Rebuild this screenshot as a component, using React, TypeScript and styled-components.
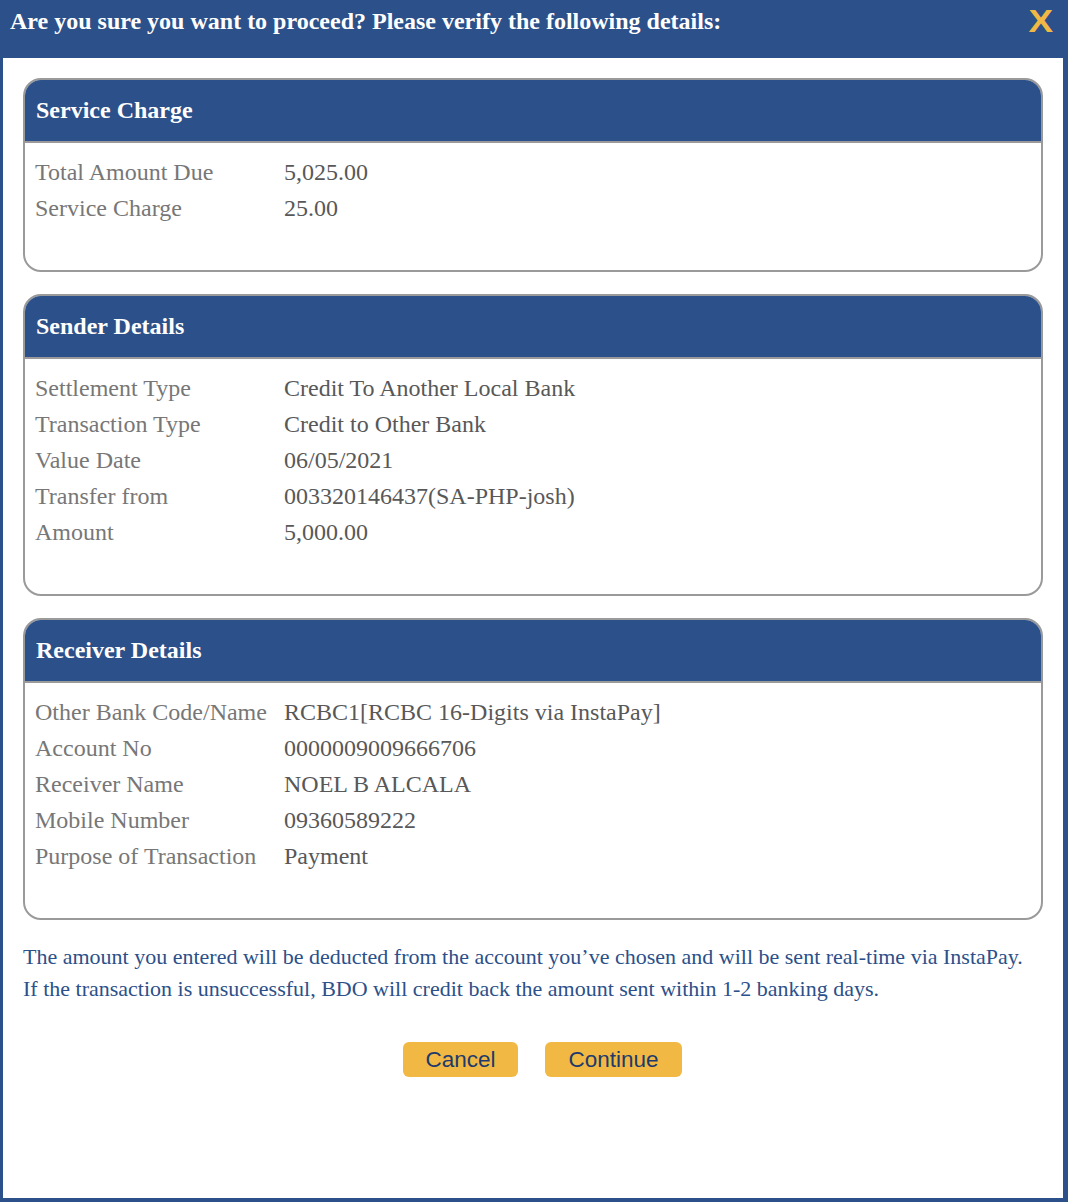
import React from "react";
import styled, { createGlobalStyle } from "styled-components";

const colors = {
    navy: "#2c5089",
    border: "#9a9a9a",
    label: "#777777",
    value: "#585858",
    gold: "#f1b943",
    goldText: "#1e3a6c",
};

const GlobalStyle = createGlobalStyle`
    html, body {
        margin: 0;
        padding: 0;
        background: ${colors.navy};
    }
    body {
        font-family: "Liberation Serif", "Times New Roman", serif;
    }
`;

const Dialog = styled.div`
    width: 1068px;
    height: 1202px;
    background: ${colors.navy};
    display: flex;
    flex-direction: column;
    box-sizing: border-box;
    padding: 0 5px 4px 3px;
`;

const TitleBar = styled.div`
    height: 58px;
    display: flex;
    align-items: center;
    justify-content: space-between;
    padding: 0 12px 16px 7px;
    box-sizing: border-box;

    h2 {
        margin: 0;
        color: #ffffff;
        font-size: 24px;
        font-weight: bold;
        font-family: "Liberation Serif", "Times New Roman", serif;
    }
`;

const CloseBtn = styled.span`
    color: ${colors.gold};
    font-family: "Liberation Sans", Arial, sans-serif;
    font-weight: bold;
    font-size: 32px;
    line-height: 1;
    transform: scaleX(1.15);
    cursor: pointer;
`;

const Content = styled.div`
    flex: 1;
    background: #ffffff;
    padding: 20px 20px 0 20px;
    display: flex;
    flex-direction: column;
    gap: 22px;
`;

const Card = styled.section`
    border: 2px solid ${colors.border};
    border-radius: 18px;
    overflow: hidden;
`;

const CardHeader = styled.div`
    background: ${colors.navy};
    height: 61px;
    border-bottom: 2px solid ${colors.border};
    display: flex;
    align-items: center;
    padding-left: 11px;

    h3 {
        margin: 0;
        color: #ffffff;
        font-size: 24px;
        font-weight: bold;
        font-family: "Liberation Serif", "Times New Roman", serif;
    }
`;

const CardBody = styled.div`
    padding: 11px 10px 44px 10px;
`;

const Row = styled.div`
    display: grid;
    grid-template-columns: 249px 1fr;
    height: 36px;
    align-items: center;
    font-size: 24px;
`;

const Label = styled.span`
    color: ${colors.label};
`;

const Value = styled.span`
    color: ${colors.value};
`;

const Notice = styled.p`
    margin: -1px 0 0 0;
    color: ${colors.navy};
    font-size: 22px;
    line-height: 32px;
`;

const Buttons = styled.div`
    display: flex;
    justify-content: center;
    gap: 27px;
    padding-left: 19px;
    margin-top: 37px;
`;

const Button = styled.button<{ $w: number }>`
    width: ${(p) => p.$w}px;
    height: 35px;
    border: none;
    border-radius: 6px;
    background: ${colors.gold};
    color: ${colors.goldText};
    font-family: "Liberation Sans", Arial, sans-serif;
    font-size: 22.5px;
    padding: 0;
    cursor: pointer;
`;

const sections = [
    {
        title: "Service Charge",
        rows: [
            ["Total Amount Due", "5,025.00"],
            ["Service Charge", "25.00"],
        ],
    },
    {
        title: "Sender Details",
        rows: [
            ["Settlement Type", "Credit To Another Local Bank"],
            ["Transaction Type", "Credit to Other Bank"],
            ["Value Date", "06/05/2021"],
            ["Transfer from", "003320146437(SA-PHP-josh)"],
            ["Amount", "5,000.00"],
        ],
    },
    {
        title: "Receiver Details",
        rows: [
            ["Other Bank Code/Name", "RCBC1[RCBC 16-Digits via InstaPay]"],
            ["Account No", "0000009009666706"],
            ["Receiver Name", "NOEL B ALCALA"],
            ["Mobile Number", "09360589222"],
            ["Purpose of Transaction", "Payment"],
        ],
    },
];

const App = () => {
    return (
        <>
            <GlobalStyle />
            <Dialog>
                <TitleBar>
                    <h2>
                        Are you sure you want to proceed? Please verify the
                        following details:
                    </h2>
                    <CloseBtn>X</CloseBtn>
                </TitleBar>
                <Content>
                    {sections.map((s) => (
                        <Card key={s.title}>
                            <CardHeader>
                                <h3>{s.title}</h3>
                            </CardHeader>
                            <CardBody>
                                {s.rows.map(([label, value]) => (
                                    <Row key={label}>
                                        <Label>{label}</Label>
                                        <Value>{value}</Value>
                                    </Row>
                                ))}
                            </CardBody>
                        </Card>
                    ))}
                    <div>
                        <Notice>
                            The amount you entered will be deducted from the
                            account you’ve chosen and will be sent real-time via
                            InstaPay.
                            <br />
                            If the transaction is unsuccessful, BDO will credit
                            back the amount sent within 1-2 banking days.
                        </Notice>
                        <Buttons>
                            <Button $w={115}>Cancel</Button>
                            <Button $w={137}>Continue</Button>
                        </Buttons>
                    </div>
                </Content>
            </Dialog>
        </>
    );
};

export default App;
